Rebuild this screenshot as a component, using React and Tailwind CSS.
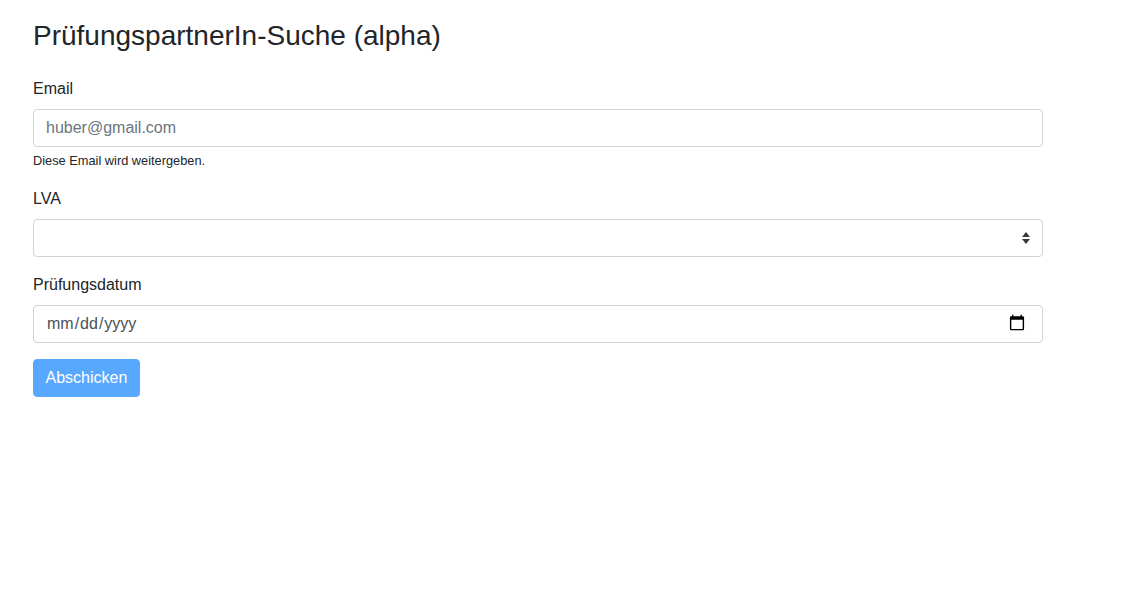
import React, { useState } from 'react';

const inputClass =
  "block w-full h-[38px] px-3 py-[6px] text-base leading-6 text-[#495057] bg-white border border-[#ced4da] rounded-[4px] placeholder:text-[#6c757d] outline-none";

const App = () => {
  const [email, setEmail] = useState('');
  const [lva, setLva] = useState('');
  const [date, setDate] = useState('');

  return (
    <div className="min-h-screen bg-white text-[#212529] font-['Liberation_Sans',Arial,sans-serif]">
      <div className="w-[1010px] ml-[33px] pt-[19px]">
        <h3 className="text-[28px] leading-[1.2] font-normal mb-6">PrüfungspartnerIn-Suche (alpha)</h3>

        <form onSubmit={(e) => e.preventDefault()}>
          <div className="mb-[17px]">
            <label className="block text-base leading-6 mb-2">Email</label>
            <input
              type="email"
              value={email}
              onChange={(e) => setEmail(e.target.value)}
              placeholder="huber@gmail.com"
              className={inputClass}
            />
            <small className="block mt-1 text-[12.8px] leading-[1.5] text-[#212529]">
              Diese Email wird weitergeben.
            </small>
          </div>

          <div className="mb-4">
            <label className="block text-base leading-6 mb-2">LVA</label>
            <div className="relative">
              <select
                value={lva}
                onChange={(e) => setLva(e.target.value)}
                className={`${inputClass} appearance-none pr-8`}
              >
                <option value=""></option>
              </select>
              <svg
                className="absolute right-[13px] top-[13px] pointer-events-none"
                width="8"
                height="12"
                viewBox="0 0 8 12"
              >
                <path d="M4 0 L8 5 H0 Z" fill="#343a40" />
                <path d="M4 12 L0 7 H8 Z" fill="#343a40" />
              </svg>
            </div>
          </div>

          <div className="mb-4">
            <label className="block text-base leading-6 mb-2">Prüfungsdatum</label>
            <input
              type="date"
              value={date}
              onChange={(e) => setDate(e.target.value)}
              className={`${inputClass} pr-[16px] [&::-webkit-calendar-picker-indicator]:w-[18px] [&::-webkit-calendar-picker-indicator]:h-[20px] [&::-webkit-calendar-picker-indicator]:p-0 [&::-webkit-calendar-picker-indicator]:m-0`}
            />
          </div>

          <button
            type="submit"
            disabled
            className="h-[38px] px-[11.5px] text-base leading-6 text-white bg-[#007bff] border border-[#007bff] rounded-[4px] opacity-65"
          >
            Abschicken
          </button>
        </form>
      </div>
    </div>
  );
};

export default App;
